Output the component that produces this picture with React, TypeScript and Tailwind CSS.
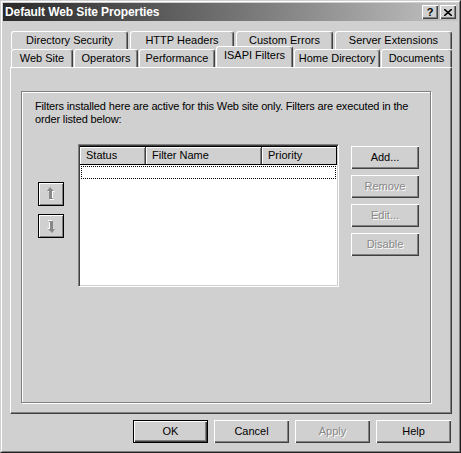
import React from 'react';

const font = { fontFamily: '"Liberation Sans", Arial, sans-serif' };

function Btn({
  label,
  disabled,
  isDefault,
  w = 'w-[75px]',
}: {
  label: string;
  disabled?: boolean;
  isDefault?: boolean;
  w?: string;
}) {
  return (
    <div
      className={`${w} h-[23px] flex items-center justify-center bg-[#d0d0d0] text-[11px] ${
        isDefault
          ? 'border border-black shadow-[inset_1px_1px_0_#fff,inset_-1px_-1px_0_#404040,inset_-2px_-2px_0_#808080]'
          : 'shadow-[inset_1px_1px_0_#fff,inset_-1px_-1px_0_#404040,inset_-2px_-2px_0_#808080]'
      } ${disabled ? 'text-[#888] [text-shadow:1px_1px_0_#fff]' : 'text-black'}`}
    >
      {label}
    </div>
  );
}

function Arrow({ down }: { down?: boolean }) {
  const d = 'M4 0 L8 4 L6 4 L6 11 L7 11 L7 12 L3 12 L3 4 L1 4 Z';
  return (
    <div className="w-[26px] h-[24px] flex items-center justify-center bg-[#d0d0d0] border border-black shadow-[inset_1px_1px_0_#fff,inset_-1px_-1px_0_#808080]">
      <svg width="10" height="14" viewBox="0 0 10 14" className={down ? 'rotate-180' : ''}>
        <path d={d} transform="translate(1 1)" fill="#fff" />
        <path d={d} fill="#888" />
      </svg>
    </div>
  );
}

function Tab({ label, w, active }: { label: string; w: string; active?: boolean }) {
  return (
    <div
      className={`${w} ${
        active ? 'h-[21px] -mt-[3px] z-10 pb-[3px]' : 'h-[18px]'
      } flex items-center justify-center bg-[#d0d0d0] border-t border-l border-white border-r border-r-[#404040] rounded-t-[3px] shadow-[inset_-1px_0_0_#808080] text-[11px] text-black`}
    >
      {label}
    </div>
  );
}

export default function App() {
  return (
    <div
      style={font}
      className="w-[461px] h-[453px] bg-[#d0d0d0] border border-t-[#d0d0d0] border-l-[#d0d0d0] border-r-[#202020] border-b-[#202020] overflow-hidden"
    >
      <div className="w-full h-full border border-t-white border-l-white border-r-[#808080] border-b-[#808080] p-[1px] flex flex-col">
        {/* title bar */}
        <div className="h-[18px] flex items-center pl-[2px] pr-[2px] bg-gradient-to-r from-[#2a2a2a] to-[#c4c4c4]">
          <span className="text-white font-bold text-[12px] tracking-[-0.1px] flex-1">
            Default Web Site Properties
          </span>
          <div className="w-[16px] h-[14px] flex items-center justify-center bg-[#d0d0d0] shadow-[inset_1px_1px_0_#fff,inset_-1px_-1px_0_#404040,inset_-2px_-2px_0_#808080] text-[11px] font-bold leading-none">
            ?
          </div>
          <div className="ml-[2px] w-[16px] h-[14px] flex items-center justify-center bg-[#d0d0d0] shadow-[inset_1px_1px_0_#fff,inset_-1px_-1px_0_#404040,inset_-2px_-2px_0_#808080]">
            <svg width="8" height="7" viewBox="0 0 8 7">
              <path d="M0 0 L8 7 M8 0 L0 7" stroke="#000" strokeWidth="1.6" />
            </svg>
          </div>
        </div>

        {/* tabs */}
        <div className="ml-[8px] mt-[10px] flex gap-[2px]">
          <Tab label="Directory Security" w="w-[117px]" />
          <Tab label="HTTP Headers" w="w-[104px]" />
          <Tab label="Custom Errors" w="w-[97px]" />
          <Tab label="Server Extensions" w="w-[117px]" />
        </div>
        <div className="ml-[8px] flex items-end gap-[1px] relative">
          <Tab label="Web Site" w="w-[62px]" />
          <Tab label="Operators" w="w-[64px]" />
          <Tab label="Performance" w="w-[76px]" />
          <Tab label="ISAPI Filters" w="w-[77px]" active />
          <Tab label="Home Directory" w="w-[86px]" />
          <Tab label="Documents" w="w-[71px]" />
        </div>

        {/* tab panel */}
        <div className="ml-[7px] w-[442px] h-[347px] border-l border-t border-white border-r border-b border-r-[#404040] border-b-[#404040] shadow-[inset_-1px_-1px_0_#808080] pt-[23px] pl-[10px]">
          <div className="w-[410px] h-[312px] border border-[#808080] shadow-[1px_1px_0_#fff,inset_1px_1px_0_#fff] pt-[8px]">
            <p className="ml-[13px] text-[11px] leading-[13px] tracking-[-0.15px] text-black w-[390px]">
              Filters installed here are active for this Web site only. Filters are executed in the
              order listed below:
            </p>
            <div className="flex mt-[18px]">
              <div className="ml-[16px] mt-[38px] flex flex-col gap-[8px]">
                <Arrow />
                <Arrow down />
              </div>
              <div className="ml-[14px] w-[261px] h-[143px] bg-white border border-t-[#808080] border-l-[#808080] border-r-white border-b-white shadow-[inset_1px_1px_0_#404040,inset_-1px_-1px_0_#d0d0d0] p-[1px] flex flex-col">
                <div className="h-[19px] flex text-[11px] text-black border-b border-black bg-[#d0d0d0] border-t border-t-black">
                  <div className="w-[66px] pl-[6px] flex items-center border-r border-[#404040] shadow-[inset_1px_0_0_#fff,inset_0_1px_0_#fff,inset_-1px_0_0_#808080]">
                    Status
                  </div>
                  <div className="w-[116px] pl-[6px] flex items-center border-r border-[#404040] shadow-[inset_1px_0_0_#fff,inset_0_1px_0_#fff,inset_-1px_0_0_#808080]">
                    Filter Name
                  </div>
                  <div className="flex-1 pl-[6px] flex items-center border-r border-black shadow-[inset_1px_0_0_#fff,inset_0_1px_0_#fff]">
                    Priority
                  </div>
                </div>
                <div className="mt-[1px] mx-[1px] h-[13px] border border-dotted border-black" />
              </div>
              <div className="ml-[12px] mt-[2px] flex flex-col gap-[6px]">
                <Btn label="Add..." w="w-[68px]" />
                <Btn label="Remove" w="w-[68px]" disabled />
                <Btn label="Edit..." w="w-[68px]" disabled />
                <Btn label="Disable" w="w-[68px]" disabled />
              </div>
            </div>
          </div>
        </div>

        {/* bottom buttons */}
        <div className="mt-[6px] ml-[130px] flex gap-[6px]">
          <Btn label="OK" isDefault />
          <Btn label="Cancel" />
          <Btn label="Apply" disabled />
          <Btn label="Help" />
        </div>
      </div>
    </div>
  );
}
